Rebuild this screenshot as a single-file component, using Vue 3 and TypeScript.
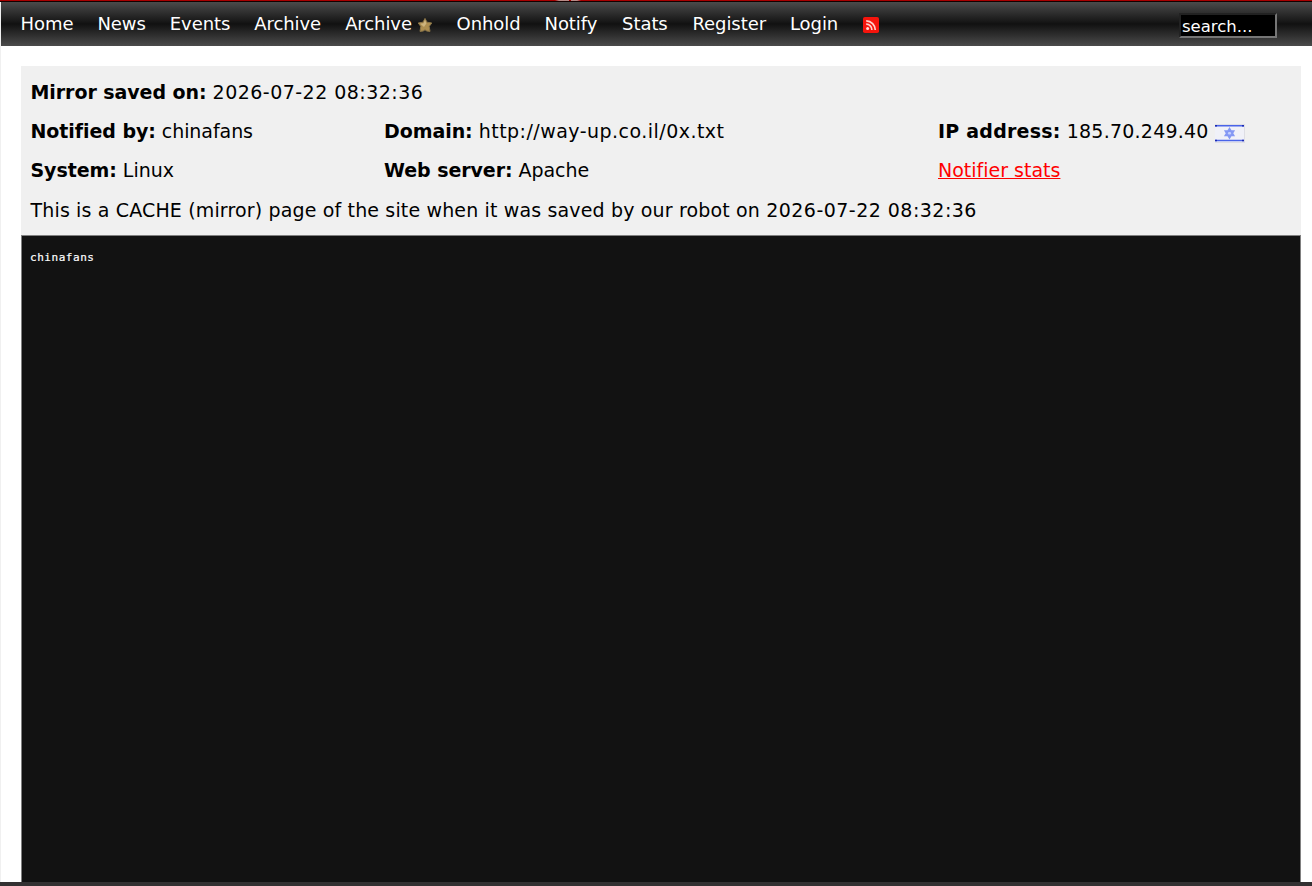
<script setup lang="ts">
interface NavItem {
  label: string
  star?: boolean
}
const nav: NavItem[] = [
  { label: 'Home' },
  { label: 'News' },
  { label: 'Events' },
  { label: 'Archive' },
  { label: 'Archive', star: true },
  { label: 'Onhold' },
  { label: 'Notify' },
  { label: 'Stats' },
  { label: 'Register' },
  { label: 'Login' },
]
const savedOn = '2026-07-22 08:32:36'
</script>

<template>
  <div class="page">
    <div class="banner">
      <svg class="tip" width="26" height="1" viewBox="0 0 26 1"><path d="M0 0h14v1H4zM16 0h10l-4 1h-6z" fill="#b88a86" /></svg>
    </div>
    <header class="bar">
      <nav class="links">
        <a v-for="(item, i) in nav" :key="i" class="link">
          <span>{{ item.label }}</span>
          <svg v-if="item.star" class="star" width="16" height="16" viewBox="0 0 16 16">
            <path d="M8 1.4 10 5.2 14.8 6 12.2 9.4 13 14.4 9.8 14 8 12.8 6.2 14 3 14.4 3.8 9.4 1.2 6 6 5.2Z" fill="#ad8e50" stroke="#8a7548" stroke-width="1" stroke-linejoin="round" />
            <path d="M8 2.6 9.4 6.4 7 10 3.4 6.8 6.6 6.2Z" fill="#cdb47e" />
          </svg>
        </a>
        <svg class="rss" width="16" height="16" viewBox="0 0 16 16">
          <rect width="16" height="16" rx="1.8" fill="#f5140c" />
          <circle cx="4.6" cy="11.6" r="1.5" fill="#ffdcd8" />
          <path d="M3.2 7.2a5.6 5.6 0 0 1 5.7 5.8M3.2 3.8a9.2 9.2 0 0 1 9.1 9.2" fill="none" stroke="#ffd0cb" stroke-width="1.7" />
        </svg>
      </nav>
      <div class="search">search...</div>
    </header>
    <main class="content">
      <section class="info">
        <p class="row"><span><b>Mirror saved on:</b> <span class="wide">{{ savedOn }}</span></span></p>
        <p class="row cols">
          <span class="tight"><b>Notified by:</b> chinafans</span>
          <span><b>Domain:</b> <span class="wide">http://way-up.co.il/0x.txt</span></span>
          <span class="ip"><span><b class="loose">IP address:</b> <span class="loose">185.70.249.40</span></span>
            <svg class="flag" width="30" height="19" viewBox="0 0 30 19">
              <rect width="30" height="19" fill="#dedee4" />
              <rect y="1" width="29" height="17" fill="#f0f1f8" />
              <path d="M0 1.8h29M0 16.5h29" stroke="#4a64e8" stroke-width="1.6" />
              <path d="M0 1h2v1.6H0zM27 1h2v1.6h-2zM0 15.7h2v1.6H0zM27 15.7h2v1.6h-2z" fill="#1c2bb0" />
              <path d="M14.5 4.7 18.5 11.3H10.5ZM14.5 13.7 10.5 7.1h8Z" fill="#c5d0ff" stroke="#8498f4" stroke-width="1.8" />
            </svg>
          </span>
        </p>
        <p class="row cols">
          <span><b>System:</b> Linux</span>
          <span class="tight"><b>Web server:</b> Apache</span>
          <span><a class="stats">Notifier stats</a></span>
        </p>
        <p class="row"><span><span class="note">This is a CACHE (mirror) page of the site when it was saved by our robot on </span><span class="wide">{{ savedOn }}</span></span></p>
      </section>
      <pre class="mirror">chinafans</pre>
    </main>
    <div class="bottom"></div>
  </div>
</template>

<style>
body {
  background: #fff;
  overflow: hidden;
}
</style>

<style scoped>
.page {
  box-sizing: border-box;
  height: 886px;
  display: flex;
  flex-direction: column;
  font-family: Verdana, 'DejaVu Sans', sans-serif;
  font-variant-ligatures: none;
  color: #000;
}
.banner {
  height: 2px;
  box-sizing: border-box;
  flex: none;
  background: #a80000;
  border-bottom: 1px solid #140000;
  padding-left: 555px;
  line-height: 0;
}
.tip {
  display: block;
}
.bar {
  flex: none;
  height: 44px;
  box-sizing: border-box;
  border-left: 1px solid #f0f0f0;
  padding: 0 35px 0 19.6px;
  display: flex;
  justify-content: space-between;
  background: linear-gradient(#4b4b4b, #111 50%, #4b4b4b);
  color: #fff;
}
.links {
  display: flex;
  gap: 24px;
  font-size: 18px;
  line-height: 44px;
  letter-spacing: -0.075px;
  white-space: nowrap;
}
.link {
  display: flex;
}
.link:nth-child(8),
.link:nth-child(9) {
  margin-left: 0.8px;
}
.star {
  margin: 15px 0 0 4.6px;
}
.rss {
  margin: 15px 0 0 0.8px;
}
.search {
  box-sizing: border-box;
  width: 98px;
  height: 25px;
  margin-top: 11px;
  border: 2px solid;
  border-color: #222 #767676 #767676 #222;
  background: #000;
  padding-left: 1px;
  font-size: 16.5px;
  line-height: 23px;
}
.content {
  flex: 1;
  min-height: 0;
  border-left: 1px solid #f0f0f0;
  padding: 20px 11px 0 20px;
  display: flex;
  flex-direction: column;
}
.info {
  flex: none;
  height: 169px;
  box-sizing: border-box;
  background: #f0f0f0;
  padding: 7px 9px 0 9.5px;
  font-size: 19px;
}
.row {
  margin: 0;
  height: 39.2px;
  line-height: 39px;
  white-space: nowrap;
}
.row b {
  letter-spacing: -0.06px;
}
.wide {
  letter-spacing: 0.47px;
}
.row .loose {
  letter-spacing: 0.23px;
}
.tight {
  letter-spacing: -0.06px;
}
.note {
  letter-spacing: 0.15px;
}
.cols {
  display: grid;
  grid-template-columns: 353.5px 554px 1fr;
}
.ip {
  display: flex;
}
.flag {
  margin: 12px 0 0 6px;
}
.stats {
  color: #f00;
  text-decoration: underline;
}
.mirror {
  flex: 1;
  margin: 0;
  border: 1px solid #808080;
  border-bottom: 0;
  background: #121212;
  color: #fff;
  padding: 15px 8px;
  font: 11px/14px 'DejaVu Sans Mono', monospace;
  letter-spacing: 0.54px;
  -webkit-text-stroke: 0.2px #fff;
}
.bottom {
  flex: none;
  height: 4px;
  background: #333132;
}
</style>
